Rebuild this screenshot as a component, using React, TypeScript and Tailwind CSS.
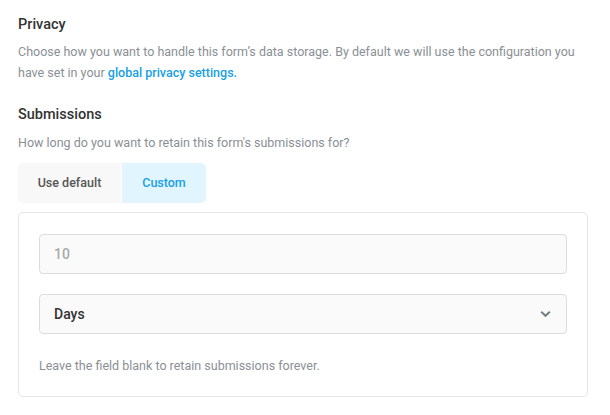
import { useState } from 'react';

// Privacy settings panel: retention for form submissions

const App = () => {
  const [mode, setMode] = useState<'default' | 'custom'>('custom');

  return (
    <div className="min-h-screen bg-white font-['Roboto',sans-serif] antialiased">
      <div className="w-[570px] ml-[18px] pt-[15px]">
        {/* Privacy */}
        <h2 className="text-[14.5px] leading-[20px] font-medium text-[#333333]">Privacy</h2>
        <p className="mt-[6px] text-[12.5px] leading-[21px] text-[#8a8f95]">
          Choose how you want to handle this form’s data storage. By default we will use the configuration you
          have set in your{' '}
          <a href="#" className="font-medium text-[#17a0e6]">
            global privacy settings.
          </a>
        </p>

        {/* Submissions */}
        <h3 className="mt-[22px] text-[14.5px] leading-[20px] font-medium text-[#333333]">Submissions</h3>
        <p className="mt-[7px] text-[12.5px] leading-[21px] text-[#8a8f95]">
          How long do you want to retain this form's submissions for?
        </p>

        {/* Tabs */}
        <div className="mt-[10px] flex h-10 w-fit overflow-hidden rounded-[5px]">
          <button
            onClick={() => setMode('default')}
            className={`w-[103px] text-[12.5px] font-medium ${
              mode === 'default' ? 'bg-[#e1f5fe] text-[#17a0e6]' : 'bg-[#f8f8f8] text-[#555555]'
            }`}
          >
            Use default
          </button>
          <button
            onClick={() => setMode('custom')}
            className={`ml-px w-[84px] text-[12.5px] font-medium ${
              mode === 'custom' ? 'bg-[#e1f5fe] text-[#17a0e6]' : 'bg-[#f8f8f8] text-[#555555]'
            }`}
          >
            Custom
          </button>
        </div>

        {/* Custom retention card */}
        <div className="mt-[9px] rounded-[5px] border border-[#e6e6e6] px-5 pt-[21px] pb-[21px]">
          <input
            type="text"
            placeholder="10"
            className="block h-10 w-full rounded-[4px] border border-[#dddddd] bg-[#fafafa] px-[14px] text-[14px] font-medium text-[#333333] placeholder:text-[#aaaaaa] outline-none"
          />
          <div className="relative mt-5">
            <select className="block h-10 w-full appearance-none rounded-[4px] border border-[#dddddd] bg-[#fafafa] px-[14px] text-[14px] font-medium text-[#333333] outline-none">
              <option>Days</option>
              <option>Weeks</option>
              <option>Months</option>
              <option>Years</option>
            </select>
            <svg
              className="pointer-events-none absolute right-[16px] top-1/2 -translate-y-1/2"
              width="11"
              height="7"
              viewBox="0 0 11 7"
              fill="none"
            >
              <path d="M1.2 1.2 5.5 5.3 9.8 1.2" stroke="#777e85" strokeWidth="2" />
            </svg>
          </div>
          <p className="mt-[23px] text-[12.5px] leading-[18px] text-[#8a8f95]">
            Leave the field blank to retain submissions forever.
          </p>
        </div>
      </div>
    </div>
  );
};

export default App;
